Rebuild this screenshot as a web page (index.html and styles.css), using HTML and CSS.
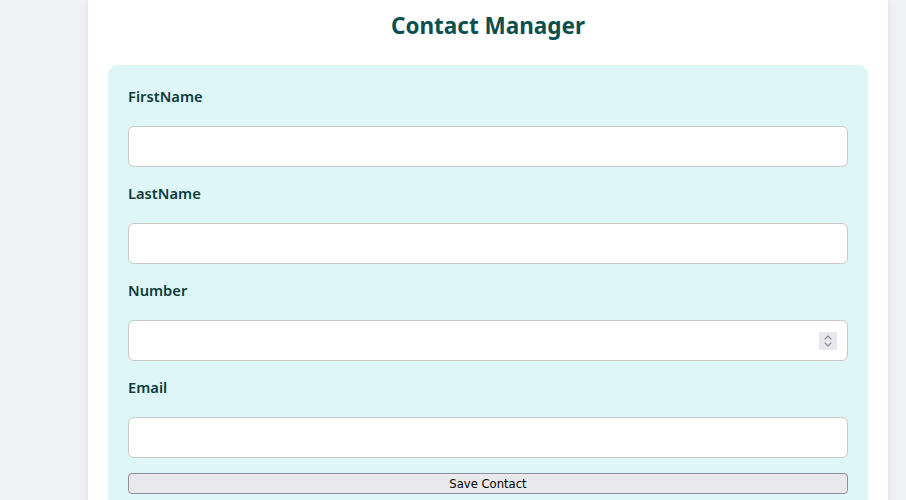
FILE: index.html
```html
<!DOCTYPE html>
<html>
<head>
<meta charset="utf-8">
<link rel="stylesheet" href="styles.css">
</head>
<body>
<div class="card">
  <h1 class="title">Contact Manager</h1>
  <form class="panel">
    <label class="label">FirstName</label>
    <input class="field" type="text">
    <label class="label">LastName</label>
    <input class="field" type="text">
    <label class="label">Number</label>
    <div class="num-wrap">
      <input class="field" type="number">
      <span class="spin">
        <svg width="10" height="14" viewBox="0 0 10 14" fill="none" stroke="#8a8a94" stroke-width="1.1" stroke-linecap="round" stroke-linejoin="round">
          <path d="M2 5 L5 2 L8 5"/>
          <path d="M2 9 L5 12 L8 9"/>
        </svg>
      </span>
    </div>
    <label class="label">Email</label>
    <input class="field" type="email">
    <button class="save" type="button">Save Contact</button>
  </form>
</div>
</body>
</html>
```
FILE: styles.css
```css
html, body {
  margin: 0;
  padding: 0;
  background: #f0f2f5;
  font-family: "Noto Sans", "Open Sans", sans-serif;
}
.card {
  width: 800px;
  margin: 0 auto 0 88px;
  background: #ffffff;
  padding: 8px 20px 20px;
  box-sizing: border-box;
  box-shadow: 0 0 10px rgba(0, 0, 0, 0.08);
  min-height: 560px;
}
.title {
  margin: 0 0 21px;
  text-align: center;
  font-size: 22.5px;
  line-height: 36px;
  font-weight: 700;
  color: #0b4f4f;
}
.panel {
  background: #dff6f8;
  border-radius: 10px;
  padding: 20px;
  display: flex;
  flex-direction: column;
}
.label {
  display: block;
  font-size: 14.7px;
  line-height: 22px;
  font-weight: 600;
  color: #0e3b3b;
  margin-bottom: 19px;
}
.field {
  width: 100%;
  height: 41px;
  box-sizing: border-box;
  border: 1px solid #c8c8c8;
  border-radius: 6px;
  background: #fff;
  margin: 0 0 15px;
  padding: 0 10px;
}
.num-wrap {
  position: relative;
  display: flex;
}
.field::-webkit-inner-spin-button,
.field::-webkit-outer-spin-button {
  -webkit-appearance: none;
  margin: 0;
}
.spin {
  position: absolute;
  top: 12px;
  right: 11px;
  width: 18px;
  height: 18px;
  background: #e8e8ee;
  display: flex;
  align-items: center;
  justify-content: center;
}
.save {
  height: 21px;
  box-sizing: border-box;
  font-family: "DejaVu Sans", sans-serif;
  font-size: 11.6px;
  color: #000;
  background: #e9e9ed;
  border: 1px solid #8f8f9d;
  border-radius: 4px;
  padding: 0;
}
```
